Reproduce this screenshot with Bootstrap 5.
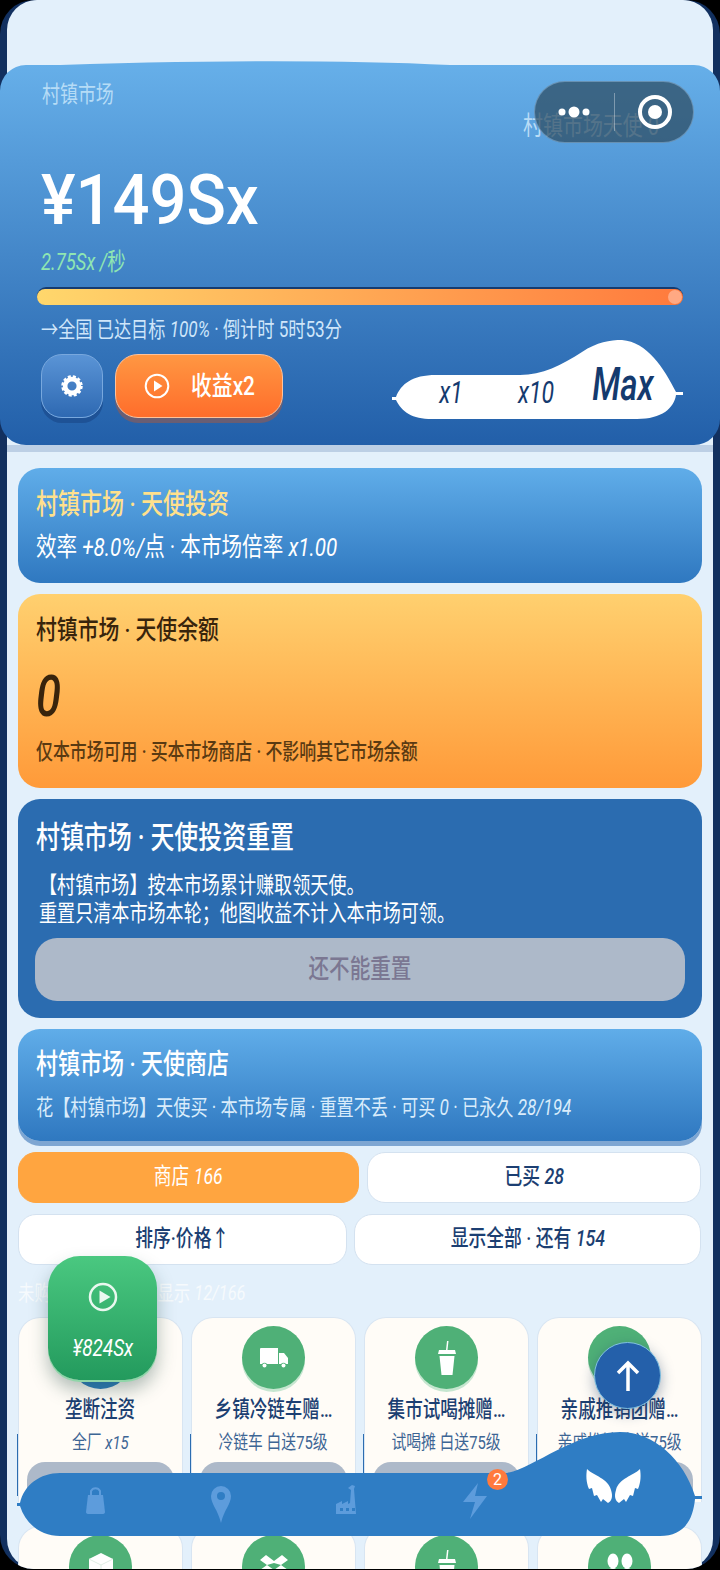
<!DOCTYPE html>
<html lang="zh">
<head>
  <meta charset="UTF-8">
  <title>村镇市场</title>
  <link href="https://cdn.jsdelivr.net/npm/bootstrap@5.3.3/dist/css/bootstrap.min.css" rel="stylesheet">
  <style>
    html, body { height: 100%; }
    body { width: 720px; height: 1570px; overflow: hidden; background: #000; font-family: Roboto, "Noto Sans CJK SC", sans-serif; color: #fff; }
    .phone { position: relative; width: 720px; height: 1569px; overflow: hidden; background: #12305f; border-radius: 34px; }
    .panel { height: 1569px; margin: 0 7px; padding-top: 65px; background: #e3f0fb; border-radius: 30px; }
    .cn { display: inline-block; white-space: nowrap; transform: scaleX(.78); transform-origin: left center; font-weight: 500; }
    .mid { transform-origin: center center; }

    .hero { height: 380px; margin: 0 -7px; padding: 0 37px; position: relative; border-radius: 26px; background: linear-gradient(#66afe9, #225fa9); }
    .hero-wave { position: absolute; left: 0; top: -5px; }
    .hero-name { height: 60px; padding: 13px 5px 0; font-size: 23px; color: #b6dcf6; }
    .hero-name .cn { font-weight: 400; }
    .hero-money { height: 92px; padding: 40px 4px 0; font-size: 70px; line-height: 70px; }
    .hero-money .cn { transform: scaleX(.93); font-weight: 500; }
    .hero-rate { margin-top: 30px; padding-left: 4px; height: 30px; font-size: 23.6px; line-height: 30px; color: #8fe6b2; }
    .hero-rate .cn { font-weight: 400; }
    .bar-track { height: 18px; margin-top: 10px; border-radius: 9px; background: #153b70; padding: 2px 0 0; }
    .bar-fill { height: 16px; border-radius: 8px; background: linear-gradient(90deg, #ffd76c, #ff7a3d); position: relative; }
    .bar-dot { position: absolute; right: 1px; top: 1px; width: 14px; height: 14px; border-radius: 50%; background: #ffa983; }
    .hero-goal { height: 32px; margin-top: 9px; padding-left: 4px; font-size: 22px; line-height: 32px; color: #cfe6fa; }
    .hero-goal .cn { font-weight: 400; }
    .hero-btns { margin-top: 8px; padding-left: 4px; }
    .gear-btn { width: 62px; height: 64px; border-radius: 21px; border: 1px solid #78a8de; background: linear-gradient(#5a94d6, #2e69b2); box-shadow: 0 5px 0 #1e5296; }
    .earn-btn { width: 168px; height: 64px; border-radius: 23px; border: 1px solid #ffc29a; background: linear-gradient(#ff9742, #ff6d2b); box-shadow: 0 5px 0 rgba(160,90,70,.55); gap: 21px; font-size: 26.7px; }
    .earn-text { width: 63px; }
    .seg-blob { position: absolute; left: 392px; top: 275px; }
    .seg-item { position: absolute; color: #143a6e; font-style: italic; font-size: 32px; line-height: 34px; white-space: nowrap; transform: translateX(-50%) scaleX(.72); }
    .seg-x1 { left: 451px; top: 310px; }
    .seg-x10 { left: 536px; top: 310px; }
    .seg-max { left: 623px; top: 296px; font-size: 46px; line-height: 46px; font-weight: 500; }
    .hero-tag { position: absolute; left: 523px; top: 46px; font-size: 25.6px; line-height: 30px; color: #b9dcf6; }
    .hero-tag .cn { font-weight: 400; }
    .capsule { position: absolute; left: 534px; top: 16px; width: 160px; height: 62px; border-radius: 31px; background: rgba(45,75,95,.72); border: 1px solid rgba(150,190,225,.5); }
    .capsule-sep { position: absolute; left: 79px; top: 11px; width: 1px; height: 38px; background: rgba(255,255,255,.35); }
    .capsule-dot { position: absolute; top: 24px; left: 22px; width: 34px; height: 12px; }
    .capsule-ring { position: absolute; left: 103px; top: 13px; width: 34px; height: 34px; border-radius: 50%; border: 4px solid #fff; }
    .capsule-ring::after { content: ""; position: absolute; left: 6px; top: 6px; width: 14px; height: 14px; border-radius: 50%; background: #fff; }

    .stack { padding: 23px 11px 0; box-shadow: inset 0 7px 0 #bccfe5; }
    .box { border-radius: 22px; padding: 0 18px; margin-bottom: 11px; }
    .box-blue { background: linear-gradient(#60ade9, #2f78c0); }
    .box-one { height: 115px; padding-top: 19px; }
    .box-head { font-size: 28.2px; line-height: 36px; }
    .box-sub { font-size: 26.4px; line-height: 34px; margin-top: 7px; }
    .box-sub .cn { font-weight: 400; }
    .txt-gold { color: #ffe08c; }
    .box-orange { height: 194px; padding-top: 18px; color: #38240c; background: linear-gradient(#ffd06f, #ff9a39); }
    .box-orange .box-head { font-size: 26.7px; }
    .box-zero { font-size: 58px; line-height: 64px; margin-top: 16px; font-weight: 500; }
    .box-note { font-size: 21.7px; line-height: 30px; margin-top: 9px; color: #5a3a12; }
    .box-dark { height: 219px; padding-top: 21px; background: #2b6cb0; }
    .box-dark .box-head { font-size: 30.7px; }
    .box-lines { font-size: 23.2px; line-height: 28px; margin-top: 15px; padding-left: 3px; }
    .box-lines .cn { font-weight: 400; display: block; }
    .reset-btn { height: 63px; margin: 11px -1px 0 -1px; border-radius: 22px; background: #adb9c9; color: #7b7792; font-size: 26.4px; }
    .box-shop { height: 112px; padding-top: 18px; box-shadow: 0 5px 0 #7ea6d2; margin-bottom: 11px; }
    .box-shop .box-sub { font-size: 22px; line-height: 30px; margin-top: 10px; color: #d9ecfb; }

    .pill-row { display: flex; gap: 8px; margin-bottom: 11px; }
    .pill-row-two { gap: 7px; margin-bottom: 0; }
    .pill { height: 51px; border-radius: 18px; background: #fff; border: 1px solid #d4e2f0; color: #1c3f72; font-size: 22.8px; }
    .pill-on { background: #ffa540; border-color: #ffa540; color: #fff; }
    .pill-on .cn { font-weight: 400; }
    .pill-a { width: 341px; }
    .pill-b { width: 334px; }
    .pill-c { width: 329px; }
    .pill-d { width: 347px; }
    .count-line { height: 52px; padding: 13px 0 0; font-size: 21px; line-height: 30px; color: #f6fafd; }
    .count-line .cn { font-weight: 400; }
    .goods { display: grid; grid-template-columns: repeat(4, minmax(0, 1fr)); gap: 24px 8px; }
    .good { position: relative; height: 185px; padding-top: 8px; text-align: center; border-radius: 22px 22px 0 0; background: #fffcf7; border: 1px solid #d8e5f2; border-bottom: 0; color: #1c3f72; }
    .good::before { content: ""; position: absolute; left: -2px; top: 116px; width: 1px; height: 62px; background: #2b6cb0; }
    .good-icon { width: 63px; height: 63px; border-radius: 50%; margin: 0 auto; background: #4fb077; box-shadow: 0 3px 0 #c6e6d0; }
    .good-icon.is-blue { background: #2e7dbe; box-shadow: none; }
    .good-low { padding-top: 18px; }
    .good-cup { padding-top: 14px; }
    .good-name { margin-top: 4px; font-size: 22.5px; line-height: 32px; }
    .good-desc { margin-top: 4px; font-size: 19px; line-height: 28px; color: #3d6594; }
    .good-desc .cn { font-weight: 400; }
    .good-buy { height: 52px; margin: 5px 8px 0; border-radius: 18px; background: #adb9c9; }

    .float-green { position: absolute; left: 48px; top: 1256px; width: 109px; height: 124px; padding-top: 26px; border-radius: 32px; background: linear-gradient(#4ac880, #239a5d); box-shadow: 0 2px 0 #8fd6a8, 0 10px 18px rgba(30,70,60,.35); font-size: 24.3px; }
    .float-green .cn { margin-top: 18px; font-weight: 400; }
    .float-up { position: absolute; left: 594px; top: 1342px; width: 67px; height: 67px; border-radius: 50%; background: #2460aa; border: 1px solid #7fc0e0; box-shadow: 0 4px 14px rgba(30,60,100,.4); }
    .dock { position: absolute; left: 14px; top: 1430px; }
    .dock-badge { position: absolute; left: 487px; top: 1469px; width: 21px; height: 21px; border-radius: 50%; background: #ff7a3d; font-size: 16px; line-height: 21px; text-align: center; }
  </style>
</head>
<body>
  <div class="phone">
    <div class="panel">
      <div class="hero">
        <svg class="hero-wave" width="720" height="6" viewBox="0 0 720 6"><path fill="#66afe9" d="M30 6Q280-3 450 5L700 6z"/></svg>
        <div class="hero-name"><span class="cn">村镇市场</span></div>
        <div class="hero-money"><span class="cn">¥149Sx</span></div>
        <div class="hero-rate"><span class="cn"><i>2.75Sx /</i>秒</span></div>
        <div class="bar-track"><div class="bar-fill"><span class="bar-dot"></span></div></div>
        <div class="hero-goal"><span class="cn">→全国 已达目标 <i>100%</i> · 倒计时 5时53分</span></div>
        <div class="hero-btns d-flex gap-2">
          <div class="gear-btn d-flex align-items-center justify-content-center me-1">
            <svg width="22" height="22" viewBox="0 0 24 24"><circle cx="12" cy="12" r="7.5" fill="none" stroke="#fff" stroke-width="5"/><circle cx="12" cy="12" r="10" fill="none" stroke="#fff" stroke-width="3.4" stroke-dasharray="3.2 2.1"/></svg>
          </div>
          <div class="earn-btn d-flex align-items-center justify-content-center">
            <svg width="26" height="26" viewBox="0 0 26 26"><circle cx="13" cy="13" r="11.3" fill="none" stroke="#fff" stroke-width="2"/><path d="M10 7.5l8.5 5.5-8.5 5.5z" fill="#fff"/></svg>
            <span class="cn earn-text">收益x2</span>
          </div>
        </div>
        <svg class="seg-blob" width="292" height="82" viewBox="0 0 292 82">
          <path fill="#fff" d="M0 57h4C9 44 20 35 44 35H128C150 35 170 25 190 12C205 2 218 0 230 0C255 2 272 28 284 52H291V55H284C282 68 270 79 245 79H40C20 79 10 72 4 60H0z"/>
        </svg>
        <span class="seg-item seg-x1">x1</span>
        <span class="seg-item seg-x10">x10</span>
        <span class="seg-item seg-max">Max</span>
        <div class="hero-tag"><span class="cn">村镇市场天使 0</span></div>
        <div class="capsule">
          <svg class="capsule-dot" viewBox="0 0 34 12"><circle cx="5" cy="6" r="3.5" fill="#fff"/><circle cx="17" cy="6" r="5.5" fill="#fff"/><circle cx="29" cy="6" r="3.5" fill="#fff"/></svg>
          <span class="capsule-sep"></span>
          <span class="capsule-ring"></span>
        </div>
      </div>

      <div class="stack">
        <div class="box box-blue box-one">
          <div class="box-head txt-gold"><span class="cn">村镇市场 · 天使投资</span></div>
          <div class="box-sub"><span class="cn">效率 <i>+8.0%/</i>点 · 本市场倍率 <i>x1.00</i></span></div>
        </div>
        <div class="box box-orange">
          <div class="box-head"><span class="cn">村镇市场 · 天使余额</span></div>
          <div class="box-zero"><span class="cn"><i>0</i></span></div>
          <div class="box-note"><span class="cn">仅本市场可用 · 买本市场商店 · 不影响其它市场余额</span></div>
        </div>
        <div class="box box-dark">
          <div class="box-head"><span class="cn">村镇市场 · 天使投资重置</span></div>
          <div class="box-lines">
            <span class="cn">【村镇市场】按本市场累计赚取领天使。</span>
            <span class="cn">重置只清本市场本轮；他图收益不计入本市场可领。</span>
          </div>
          <div class="reset-btn d-flex align-items-center justify-content-center"><span class="cn mid">还不能重置</span></div>
        </div>
        <div class="box box-blue box-shop">
          <div class="box-head"><span class="cn">村镇市场 · 天使商店</span></div>
          <div class="box-sub"><span class="cn">花【村镇市场】天使买 · 本市场专属 · 重置不丢 · 可买 <i>0</i> · 已永久 <i>28/194</i></span></div>
        </div>
        <div class="pill-row">
          <div class="pill pill-a pill-on d-flex align-items-center justify-content-center"><span class="cn mid">商店 <i>166</i></span></div>
          <div class="pill pill-b d-flex align-items-center justify-content-center"><span class="cn mid">已买 <i>28</i></span></div>
        </div>
        <div class="pill-row pill-row-two">
          <div class="pill pill-c d-flex align-items-center justify-content-center"><span class="cn mid">排序·价格↑</span></div>
          <div class="pill pill-d d-flex align-items-center justify-content-center"><span class="cn mid">显示全部 · 还有 <i>154</i></span></div>
        </div>
        <div class="count-line"><span class="cn">未购买 · 价格升序 · 显示 <i>12/166</i></span></div>
        <div class="goods">
          <div class="good">
            <div class="good-icon is-blue"></div>
            <div class="good-name"><span class="cn mid">垄断注资</span></div>
            <div class="good-desc"><span class="cn mid">全厂 <i>x15</i></span></div>
            <div class="good-buy"></div>
          </div>
          <div class="good">
            <div class="good-icon d-flex align-items-center justify-content-center">
              <svg width="30" height="22" viewBox="0 0 30 22"><path fill="#fff" d="M1 2q0-1 1-1h17v16H8a3 3 0 0 0-5 0H1zM20 6h5l4 5v6h-2a3 3 0 0 0-5 0h-2z"/><circle cx="5.500" cy="18.500" r="2" fill="#fff"/><circle cx="24.500" cy="18.500" r="2" fill="#fff"/></svg>
            </div>
            <div class="good-name"><span class="cn mid">乡镇冷链车赠…</span></div>
            <div class="good-desc"><span class="cn mid">冷链车 白送75级</span></div>
            <div class="good-buy"></div>
          </div>
          <div class="good">
            <div class="good-icon d-flex align-items-center justify-content-center">
              <svg width="22" height="36" viewBox="0 0 22 36"><path fill="#fff" d="M10 10l1-9h1.500l-1 9H19l1 4H2l1-4zM3.500 16h15l-2 19H5.500z"/></svg>
            </div>
            <div class="good-name"><span class="cn mid">集市试喝摊赠…</span></div>
            <div class="good-desc"><span class="cn mid">试喝摊 白送75级</span></div>
            <div class="good-buy"></div>
          </div>
          <div class="good">
            <div class="good-icon d-flex align-items-center justify-content-center">
              <svg width="34" height="24" viewBox="0 0 34 24"><circle cx="10" cy="8" r="6" fill="#fff"/><path fill="#fff" d="M1 24c0-6 4-9 9-9s7 3 7 9z"/></svg>
            </div>
            <div class="good-name"><span class="cn mid">亲戚推销团赠…</span></div>
            <div class="good-desc"><span class="cn mid">亲戚推销 白送75级</span></div>
            <div class="good-buy"></div>
          </div>
          <div class="good">
            <div class="good-icon good-low d-flex align-items-start justify-content-center">
              <svg width="26" height="30" viewBox="0 0 26 30"><path fill="#fff" d="M13 0l12 6v18l-12 6-12-6V6z"/><path fill="none" stroke="#dfeee5" stroke-width="1" d="M1 6l12 6 12-6M13 12v18"/></svg>
            </div>
          </div>
          <div class="good">
            <div class="good-icon good-low d-flex align-items-start justify-content-center">
              <svg width="30" height="30" viewBox="0 0 30 30"><path fill="#fff" d="M15 8L7 2 1 7l7 5-7 5 14 9 14-9-7-5 7-5-6-5zM15 10l7 2-7 5-7-5z"/></svg>
            </div>
          </div>
          <div class="good">
            <div class="good-icon good-cup d-flex align-items-start justify-content-center">
              <svg width="22" height="36" viewBox="0 0 22 36"><path fill="#fff" d="M10 10l1-9h1.500l-1 9H19l1 4H2l1-4zM3.500 16h15l-2 19H5.500z"/></svg>
            </div>
          </div>
          <div class="good">
            <div class="good-icon good-low d-flex align-items-start justify-content-center">
              <svg width="34" height="24" viewBox="0 0 34 24"><ellipse cx="10" cy="8" rx="5.500" ry="7.500" fill="#fff"/><ellipse cx="24" cy="8" rx="5.500" ry="7.500" fill="#fff"/><path fill="#fff" d="M3 24c0-6 3-9 7-9s5 3 5 9zM19 24c0-6 1-9 5-9s7 3 7 9z"/></svg>
            </div>
          </div>
        </div>
      </div>
    </div>

    <div class="float-green d-flex flex-column align-items-center">
      <svg width="30" height="30" viewBox="0 0 30 30"><circle cx="15" cy="15" r="13" fill="none" stroke="#e9f8ef" stroke-width="2.500"/><path d="M11.500 8.500l11 6.500-11 6.500z" fill="#e9f8ef"/></svg>
      <span class="cn mid"><i>¥824Sx</i></span>
    </div>
    <div class="float-up d-flex align-items-center justify-content-center">
      <svg width="24" height="32" viewBox="0 0 24 32"><path d="M12 31V3M2 13L12 3l10 10" fill="none" stroke="#fff" stroke-width="3.500"/></svg>
    </div>

    <svg class="dock" width="692" height="108" viewBox="0 0 692 108">
      <path fill="#2f7dc4" d="M3 73H6C10 55 26 43 46 43H493C520 38 560 2 606 2C640 2 670 30 681 66H688V69H681C679 90 670 106 646 106H46C28 106 12 95 6 76H3z"/>
      <g fill="#5d9cdc">
        <path d="M74 65h15l2 17q0 2-3 2H75q-3 0-3-2z"/>
        <path d="M77 65v-4a5 5 0 0 1 9 0v4" fill="none" stroke="#5d9cdc" stroke-width="2"/>
        <path fill-rule="evenodd" d="M207 56a10 10 0 0 1 10 10c0 8-7 14-10 27c-3-13-10-19-10-27a10 10 0 0 1 10-10zm0 6a4 4 0 1 0 0 8a4 4 0 0 0 0-8z"/>
        <path fill-rule="evenodd" d="M322 84V74l6-3v3l6-3v3l2-1 1-13-3-2 4-3 3 1-1 3 2 25zM326 78v3h3v-3zM332 78v3h3v-3zM338 78v3h3v-3z"/>
        <path d="M464 53L449 72H461L456 89L473 66H461z"/>
      </g>
      <g fill="#fff">
        <path d="M573 39C580 46 594 48 597 60C599 66 598 71 594 73L589 69L587 72L583 65L580 66L578 58L575 59C572 52 572 45 573 39z"/>
        <path d="M573 39C580 46 594 48 597 60C599 66 598 71 594 73L589 69L587 72L583 65L580 66L578 58L575 59C572 52 572 45 573 39z" transform="matrix(-1 0 0 1 1199 0)"/>
      </g>
    </svg>
    <div class="dock-badge">2</div>
  </div>
  <script src="https://cdn.jsdelivr.net/npm/bootstrap@5.3.3/dist/js/bootstrap.bundle.min.js"></script>
</body>
</html>
